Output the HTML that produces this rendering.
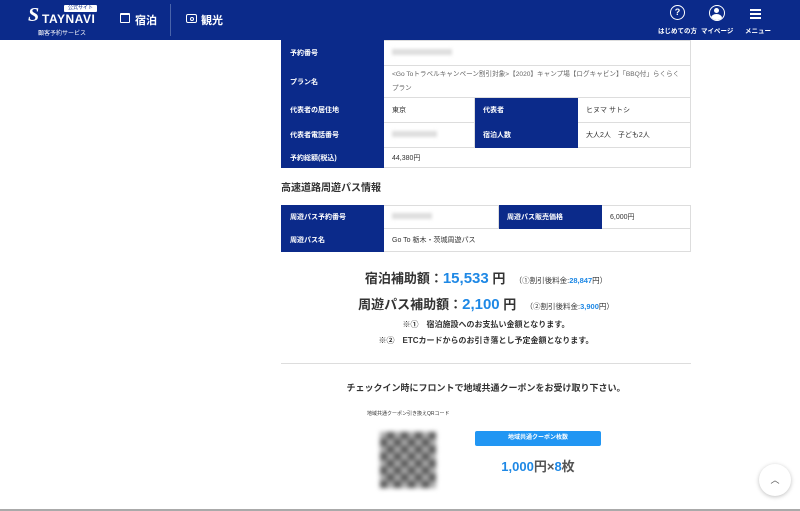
<!DOCTYPE html>
<html><head><meta charset="utf-8"><style>
*{margin:0;padding:0;box-sizing:border-box}
body{width:800px;height:511px;overflow:hidden;background:#fff;font-family:"Liberation Sans","Noto Sans CJK JP",sans-serif;color:#333;position:relative}
.hd{position:absolute;left:0;top:0;width:800px;height:40px;background:#0b2a8a;color:#fff}
.a{position:absolute}
.t{position:absolute;border-collapse:collapse;font-size:7px}
.t td{border:1px solid #ddd;padding:0 8px;vertical-align:middle}
.t td.l{background:#0b2a8a;color:#fff;font-weight:bold;border-color:#0b2a8a}
.blur{display:inline-block;width:60px;height:6px;background:#ddd;filter:blur(1.5px)}
.c{position:absolute;left:281px;width:410px;text-align:center}
.b{color:#1e88e5;font-weight:bold}
</style></head><body>
<div class="hd">
 <div class="a" style="left:28px;top:4px;font-family:'Liberation Serif',serif;font-style:italic;font-size:20px;font-weight:bold">S</div>
 <div class="a" style="left:42px;top:12px;font-size:12px;font-weight:bold;letter-spacing:0.5px">TAYNAVI</div>
 <div class="a" style="left:64px;top:5px;width:33px;height:7px;background:#fff;color:#0b2a8a;font-size:5px;text-align:center;line-height:7px;border-radius:1px">公式サイト</div>
 <div class="a" style="left:38px;top:28px;font-size:6px">顧客予約サービス</div>
 <div class="a" style="left:120px;top:13px;width:10px;height:10px;border:1.3px solid #fff;border-radius:1px;border-top-width:2.5px"></div>
 <div class="a" style="left:135px;top:12px;font-size:11px;font-weight:bold">宿泊</div>
 <div class="a" style="left:170px;top:4px;width:1px;height:32px;background:#4a64aa"></div>
 <div class="a" style="left:186px;top:14px;width:11px;height:9px;border:1.3px solid #fff;border-radius:2px"><div class="a" style="left:2.5px;top:1.5px;width:4px;height:4px;border:1px solid #fff;border-radius:50%"></div></div>
 <div class="a" style="left:201px;top:12px;font-size:11px;font-weight:bold">観光</div>
 <div class="a" style="left:670px;top:5px;width:15px;height:15px;border:1.5px solid #fff;border-radius:50%;font-size:9px;text-align:center;line-height:12px;font-weight:bold">?</div>
 <div class="a" style="left:658px;top:25px;font-size:6.5px;font-weight:bold">はじめての方</div>
 <div class="a" style="left:709px;top:5px;width:16px;height:16px;border:1.5px solid #fff;border-radius:50%;overflow:hidden"><div class="a" style="left:4px;top:2px;width:5px;height:5px;background:#fff;border-radius:50%"></div><div class="a" style="left:1px;top:8px;width:11px;height:8px;background:#fff;border-radius:50%"></div></div>
 <div class="a" style="left:701px;top:25px;font-size:6.5px;font-weight:bold">マイページ</div>
 <div class="a" style="left:750px;top:9px;width:11px;height:1.5px;background:#fff;box-shadow:0 4px 0 #fff,0 8px 0 #fff"></div>
 <div class="a" style="left:745px;top:25px;font-size:6.5px;font-weight:bold">メニュー</div>
</div>

<table class="t" style="left:281px;top:40px;width:410px">
<tr style="height:25px"><td class="l" style="width:102px">予約番号</td><td colspan="3"><span class="blur"></span></td></tr>
<tr style="height:32px"><td class="l">プラン名</td><td colspan="3" style="color:#666;line-height:14px;font-size:6.6px">&lt;Go Toトラベルキャンペーン割引対象&gt;【2020】キャンプ場【ログキャビン】「BBQ付」らくらくプラン</td></tr>
<tr style="height:25px"><td class="l">代表者の居住地</td><td style="width:91px">東京</td><td class="l" style="width:103px">代表者</td><td>ヒヌマ サトシ</td></tr>
<tr style="height:25px"><td class="l">代表者電話番号</td><td><span class="blur" style="width:45px"></span></td><td class="l">宿泊人数</td><td>大人2人　子ども2人</td></tr>
<tr style="height:20px"><td class="l">予約総額(税込)</td><td colspan="3">44,380円</td></tr>
</table>

<div class="a" style="left:281px;top:179px;font-size:10px;font-weight:bold">高速道路周遊パス情報</div>
<table class="t" style="left:281px;top:205px;width:410px">
<tr style="height:23px"><td class="l" style="width:102px">周遊パス予約番号</td><td style="width:115px"><span class="blur" style="width:40px"></span></td><td class="l" style="width:103px">周遊パス販売価格</td><td>6,000円</td></tr>
<tr style="height:23px"><td class="l">周遊パス名</td><td colspan="3">Go To 栃木・茨城周遊パス</td></tr>
</table>

<div class="c" style="top:268px;font-size:13px;font-weight:bold">宿泊補助額：<span class="b" style="font-size:15px">15,533</span> 円　<span style="font-size:7.5px;font-weight:normal">（①割引後料金:<span class="b">28,847</span>円）</span></div>
<div class="c" style="top:294px;font-size:13px;font-weight:bold">周遊パス補助額：<span class="b" style="font-size:15px">2,100</span> 円　<span style="font-size:7.5px;font-weight:normal">（②割引後料金:<span class="b">3,900</span>円）</span></div>
<div class="c" style="top:319px;font-size:8px;font-weight:bold">※①　宿泊施設へのお支払い金額となります。</div>
<div class="c" style="top:335px;font-size:8px;font-weight:bold">※②　ETCカードからのお引き落とし予定金額となります。</div>
<div class="a" style="left:281px;top:363px;width:410px;height:1px;background:#ddd"></div>
<div class="c" style="top:381px;font-size:9px;font-weight:bold">チェックイン時にフロントで地域共通クーポンをお受け取り下さい。</div>
<div class="a" style="left:367px;top:410px;font-size:5px">地域共通クーポン引き換えQRコード</div>
<div class="a" style="left:380px;top:432px;width:56px;height:56px;background:repeating-conic-gradient(#555 0 25%,#aaa 0 50%) 0 0/14px 14px;filter:blur(2.5px)"></div>
<div class="a" style="left:475px;top:431px;width:126px;height:15px;background:#2196f3;border-radius:2px;color:#fff;font-size:6px;text-align:center;line-height:15px;font-weight:bold">地域共通クーポン枚数</div>
<div class="a" style="left:475px;top:456px;width:126px;text-align:center;font-size:13px;font-weight:bold;color:#555"><span class="b">1,000</span>円×<span class="b">8</span>枚</div>
<div class="a" style="left:759px;top:464px;width:32px;height:32px;border-radius:50%;background:#fff;box-shadow:0 1px 4px rgba(0,0,0,.25);text-align:center;line-height:32px;font-size:9px;color:#555">︿</div>
<div class="a" style="left:0;top:509px;width:800px;height:2px;background:#aaa"></div>
</body></html>
